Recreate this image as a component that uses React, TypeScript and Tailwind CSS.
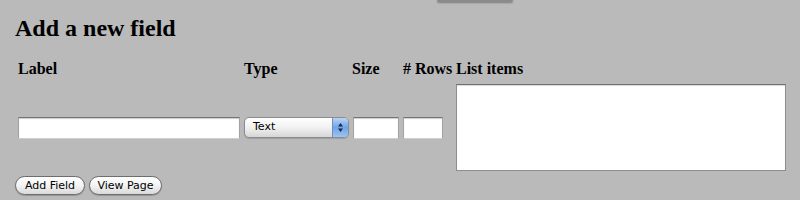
import React from "react";

const serif = { fontFamily: '"Liberation Serif", "Times New Roman", serif' };

function TextInput({ className = "" }: { className?: string }) {
  return (
    <input
      type="text"
      className={
        "h-[22px] border border-x-[#a3a3a3] border-t-[#757575] border-b-[#cfcfcf] bg-white shadow-[inset_0_1px_1px_rgba(0,0,0,0.2)] outline-none " +
        className
      }
    />
  );
}

function AquaSelect() {
  return (
    <div className="flex h-[21px] w-[105px] items-stretch overflow-hidden rounded-[5px] border border-[#8c8c8c] bg-gradient-to-b from-white via-[#f1f1f1] to-[#d6d6d6] shadow-[0_1px_1px_rgba(0,0,0,0.15)]">
      <span className="flex flex-1 items-center pl-[8px] font-['DejaVu_Sans',sans-serif] text-[11px] text-black">
        Text
      </span>
      <span className="flex w-[16px] items-center justify-center border-l border-[#6e8fbf] bg-gradient-to-b from-[#b9d4f5] via-[#6ea4e8] to-[#9cc5f3]">
        <svg width="7" height="11" viewBox="0 0 7 11">
          <path d="M3.5 1 L6 4.5 H1 Z" fill="#1c2a44" />
          <path d="M3.5 10 L6 6.5 H1 Z" fill="#1c2a44" />
        </svg>
      </span>
    </div>
  );
}

function PillButton({ label, w }: { label: string; w: string }) {
  return (
    <button
      className={
        "flex h-[19px] items-center justify-center rounded-full border border-[#6d6d6d] bg-gradient-to-b from-white via-[#f3f3f3] to-[#d9d9d9] font-['DejaVu_Sans',sans-serif] text-[11px] leading-none text-black shadow-[0_1px_1px_rgba(0,0,0,0.2)] " +
        w
      }
    >
      {label}
    </button>
  );
}

export default function App() {
  return (
    <div className="h-[200px] w-[800px] overflow-hidden bg-[#bababa] pl-[15px] text-black">
      <div className="ml-[422px] h-[2px] w-[76px] rounded-b-[2px] bg-[#8a8a8a] shadow-[0_1px_2px_rgba(0,0,0,0.35)]" />

      <h2 className="mt-[14px] text-[24px] font-bold leading-6" style={serif}>
        Add a new field
      </h2>

      <div
        className="ml-[3px] mt-[20px] grid grid-cols-[226px_108px_51px_53px_330px] text-[16px] font-bold leading-[18px]"
        style={serif}
      >
        <span>Label</span>
        <span>Type</span>
        <span>Size</span>
        <span className="whitespace-nowrap"># Rows</span>
        <span>List items</span>
      </div>

      <div className="ml-[3px] mt-[6px] grid grid-cols-[226px_108px_51px_53px_330px] items-center">
        <TextInput className="w-[222px]" />
        <AquaSelect />
        <TextInput className="ml-px w-[46px]" />
        <TextInput className="w-[40px]" />
        <textarea className="h-[87px] w-[330px] resize-none border border-[#8e8e8e] border-t-[#6f6f6f] bg-white shadow-[inset_0_1px_1px_rgba(0,0,0,0.15)] outline-none" />
      </div>

      <div className="mt-[5px] flex gap-[4px]">
        <PillButton label="Add Field" w="w-[70px]" />
        <PillButton label="View Page" w="w-[73px]" />
      </div>
    </div>
  );
}
